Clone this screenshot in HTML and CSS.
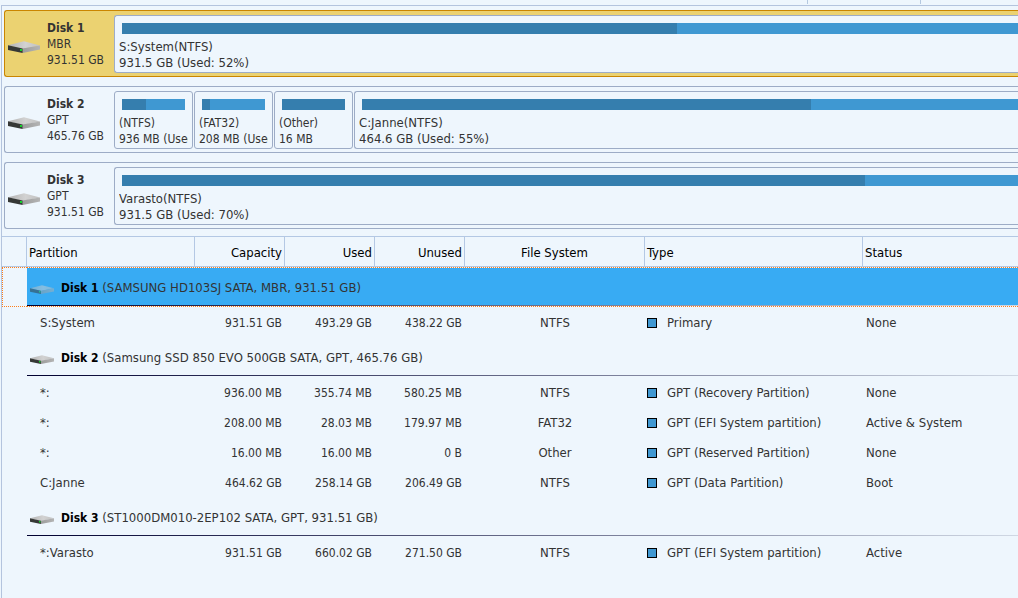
FILE: index.html
```html
<!DOCTYPE html>
<html lang="en">
<head>
<meta charset="utf-8">
<title>Disks</title>
<link rel="stylesheet" href="styles.css">
</head>
<body>
<svg class="defs" aria-hidden="true">
  <defs>
    <linearGradient id="top" x1="0" y1="0" x2="1" y2="0"><stop offset="0" stop-color="#b2b2b2"/><stop offset=".55" stop-color="#d2d2d2"/><stop offset="1" stop-color="#c0c0c0"/></linearGradient>
    <linearGradient id="side" x1="0" y1="0" x2="1" y2="0"><stop offset="0" stop-color="#9c9c9c"/><stop offset="1" stop-color="#b4b4b4"/></linearGradient>
    <symbol id="drive" viewBox="0 0 32 12">
      <path d="M0 4.2 16 .2 32 4.4 14.6 8Z" fill="url(#top)"/>
      <path d="M14.4 7.6 32 4.4V8.6L14.6 12Z" fill="url(#side)"/>
      <path d="M0 4.2 14.6 7.6V12L0 9Z" fill="#363836"/>
      <path d="M12 8h2v2h-2z" fill="#12d42a"/>
    </symbol>
  </defs>
</svg>
<header class="strip"><span class="strip-col"></span><span class="strip-col"></span><span class="strip-col"></span></header>
<main class="pane">
  <section class="disks">
    <article class="disk disk-active">
      <svg class="drive"><use href="#drive"/></svg>
      <div class="disk-info"><b>Disk 1</b><span>MBR</span><span>931.51 GB</span></div>
      <div class="parts">
        <div class="part part-wide"><div class="bar"><div class="used" style="width:61.9%"></div></div><div class="part-text">S:System(NTFS)</div><div class="part-text">931.5 GB (Used: 52%)</div></div>
      </div>
    </article>
    <article class="disk">
      <svg class="drive"><use href="#drive"/></svg>
      <div class="disk-info"><b>Disk 2</b><span>GPT</span><span>465.76 GB</span></div>
      <div class="parts">
        <div class="part"><div class="bar"><div class="used" style="width:38%"></div></div><div class="part-text">(NTFS)</div><div class="part-text">936 MB (Used: 38%)</div></div>
        <div class="part"><div class="bar"><div class="used" style="width:13%"></div></div><div class="part-text">(FAT32)</div><div class="part-text">208 MB (Used: 13%)</div></div>
        <div class="part"><div class="bar"><div class="used" style="width:100%"></div></div><div class="part-text">(Other)</div><div class="part-text">16 MB</div></div>
        <div class="part part-wide"><div class="bar"><div class="used" style="width:68.4%"></div></div><div class="part-text">C:Janne(NTFS)</div><div class="part-text">464.6 GB (Used: 55%)</div></div>
      </div>
    </article>
    <article class="disk">
      <svg class="drive"><use href="#drive"/></svg>
      <div class="disk-info"><b>Disk 3</b><span>GPT</span><span>931.51 GB</span></div>
      <div class="parts">
        <div class="part part-wide"><div class="bar"><div class="used" style="width:82.9%"></div></div><div class="part-text">Varasto(NTFS)</div><div class="part-text">931.5 GB (Used: 70%)</div></div>
      </div>
    </article>
  </section>
  <table class="list">
    <colgroup><col class="c-mark"><col class="c-name"><col class="c-size"><col class="c-size"><col class="c-size"><col class="c-fs"><col class="c-type"><col></colgroup>
    <thead>
      <tr><th></th><th>Partition</th><th class="num">Capacity</th><th class="num">Used</th><th class="num">Unused</th><th class="mid">File System</th><th>Type</th><th>Status</th></tr>
    </thead>
    <tbody>
      <tr class="group selected"><td></td><td colspan="7"><div class="group-row"><svg class="drive-small"><use href="#drive"/></svg><span><b>Disk 1</b> (SAMSUNG HD103SJ SATA, MBR, 931.51 GB)</span></div></td></tr>
      <tr><td></td><td class="name">S:System</td><td class="num">931.51 GB</td><td class="num">493.29 GB</td><td class="num">438.22 GB</td><td class="mid">NTFS</td><td><span class="kind">Primary</span></td><td class="status">None</td></tr>
      <tr class="group"><td></td><td colspan="7"><div class="group-row"><svg class="drive-small"><use href="#drive"/></svg><span><b>Disk 2</b> (Samsung SSD 850 EVO 500GB SATA, GPT, 465.76 GB)</span></div></td></tr>
      <tr><td></td><td class="name">*:</td><td class="num">936.00 MB</td><td class="num">355.74 MB</td><td class="num">580.25 MB</td><td class="mid">NTFS</td><td><span class="kind">GPT (Recovery Partition)</span></td><td class="status">None</td></tr>
      <tr><td></td><td class="name">*:</td><td class="num">208.00 MB</td><td class="num">28.03 MB</td><td class="num">179.97 MB</td><td class="mid">FAT32</td><td><span class="kind">GPT (EFI System partition)</span></td><td class="status">Active &amp; System</td></tr>
      <tr><td></td><td class="name">*:</td><td class="num">16.00 MB</td><td class="num">16.00 MB</td><td class="num">0 B</td><td class="mid">Other</td><td><span class="kind">GPT (Reserved Partition)</span></td><td class="status">None</td></tr>
      <tr><td></td><td class="name">C:Janne</td><td class="num">464.62 GB</td><td class="num">258.14 GB</td><td class="num">206.49 GB</td><td class="mid">NTFS</td><td><span class="kind">GPT (Data Partition)</span></td><td class="status">Boot</td></tr>
      <tr class="group"><td></td><td colspan="7"><div class="group-row"><svg class="drive-small"><use href="#drive"/></svg><span><b>Disk 3</b> (ST1000DM010-2EP102 SATA, GPT, 931.51 GB)</span></div></td></tr>
      <tr><td></td><td class="name">*:Varasto</td><td class="num">931.51 GB</td><td class="num">660.02 GB</td><td class="num">271.50 GB</td><td class="mid">NTFS</td><td><span class="kind">GPT (EFI System partition)</span></td><td class="status">Active</td></tr>
    </tbody>
  </table>
</main>
</body>
</html>
```
FILE: styles.css
```css
*, *::before { box-sizing: border-box; }

body {
  margin: 0;
  min-height: 100vh;
  display: flex;
  flex-direction: column;
  background: #eef6fd;
  color: #333;
  font: 13px/16px "DejaVu Sans Condensed", Tahoma, "DejaVu Sans", sans-serif;
}

b { font-size: 12px; }

.defs { position: absolute; width: 0; height: 0; }

.strip { display: flex; height: 4px; margin-bottom: 1px; }
.strip-col { flex: 0 0 113px; border-right: 1px solid #b4c8e0; }
.strip-col:first-child { flex-basis: 808px; }
.strip-col:last-child { flex: 1; border-right: 0; }

.pane {
  flex: 1;
  margin-left: 1px;
  border-top: 1px solid #b4c4de;
  border-left: 1px solid #b4c4de;
}

.disks { display: flex; flex-direction: column; gap: 9px; padding: 4px 0 7px 2px; }

.disk {
  display: flex;
  align-items: center;
  height: 67px;
  padding-left: 3px;
  border: 1px solid #9dacc6;
  border-right: 0;
  border-radius: 3px 0 0 3px;
}
.disk-active { background: #ebd271; border-color: #ca8500; }

.drive { width: 32px; height: 12px; margin: 6px 7px 0 0; }
.disk-info { display: flex; flex-direction: column; width: 67px; font-size: 12px; }

.parts { flex: 1; min-width: 0; display: flex; gap: 1px; }
.part {
  width: 79px;
  height: 58px;
  padding: 7px 4px 1px;
  background: #eef6fd;
  border: 1px solid #9dacc6;
  border-radius: 3px;
  font-size: 12px;
}
.part-wide { flex: 1; min-width: 0; padding-right: 0; border-right: 0; border-radius: 3px 0 0 3px; font-size: 13px; }
.bar { height: 11px; margin: 0 3px 5px; background: #3f98d2; }
.part-wide .bar { margin-right: 0; }
.used { height: 100%; background: #357eae; }
.part-text { white-space: nowrap; overflow: hidden; }

.list { width: 100%; border-collapse: separate; border-spacing: 0; table-layout: fixed; }
.c-mark { width: 25px; }
.c-name { width: 168px; }
.c-size { width: 90px; }
.c-fs { width: 180px; }
.c-type { width: 218px; }

th {
  height: 31px;
  padding: 2px 2px 0;
  border: 1px solid #b4c8e4;
  border-left: 0;
  color: #000;
  font-weight: 400;
  text-align: left;
}
th:last-child { border-right: 0; }

td { height: 30px; padding: 2px 2px 0; white-space: nowrap; }
th.num, td.num { text-align: right; }
td.num { padding-right: 3px; font-size: 12px; }
th.mid, td.mid { text-align: center; }
td.name { padding-left: 13px; }
td.status { padding-left: 3px; }

.kind { display: flex; align-items: center; gap: 10px; }
.kind::before {
  content: "";
  width: 10px;
  height: 10px;
  background: #3f98d2;
  border: 1px solid #000;
}

.group td { height: 40px; padding: 0; vertical-align: top; }
.group-row {
  display: flex;
  align-items: center;
  gap: 7px;
  height: 39px;
  padding: 3px 0 0 3px;
  border-bottom: 1px solid;
  border-image: linear-gradient(90deg, #000030, #d0d8e4) 1;
}
.group b { color: #000; }
.drive-small { width: 24px; height: 9px; margin-top: 4px; }
.selected td { border: 1px dotted #ff7f1a; border-width: 1px 0; }
.selected td:first-child { border-left-width: 1px; }
.selected .group-row { height: 38px; padding-top: 2px; background: #38abf3; }
.selected .drive-small { opacity: .5; }
```
